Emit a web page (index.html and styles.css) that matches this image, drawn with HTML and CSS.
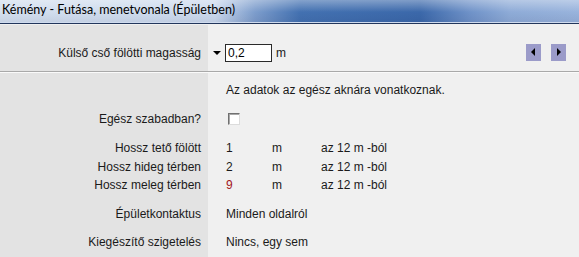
FILE: index.html
```html
<!DOCTYPE html>
<html lang="hu">
<head>
  <meta charset="UTF-8" />
  <title>Kémény - Futása, menetvonala</title>
  <link rel="stylesheet" href="styles.css">
</head>
<body>
  <div class="window">
    <div class="titlebar">Kémény - Futása, menetvonala (Épületben)</div>

    <div class="panel">
      <div class="row head">
        <div class="label">Külső cső fölötti magasság</div>
        <div class="value">
          <span class="drop"></span>
          <span class="field">0,2</span>
          <span class="field-unit">m</span>
        </div>
        <div class="nav">
          <button class="arrow prev"></button>
          <button class="arrow next"></button>
        </div>
      </div>

      <div class="divider"></div>

      <div class="row note">
        <div class="label"></div>
        <div class="value">Az adatok az egész aknára vonatkoznak.</div>
      </div>

      <div class="row check">
        <div class="label">Egész szabadban?</div>
        <div class="value"><span class="checkbox"></span></div>
      </div>

      <div class="lengths">
        <div class="row">
          <div class="label">Hossz tető fölött</div>
          <div class="value"><span class="qty">1</span><span class="unit">m</span><span>az 12 m -ból</span></div>
        </div>
        <div class="row">
          <div class="label">Hossz hideg térben</div>
          <div class="value"><span class="qty">2</span><span class="unit">m</span><span>az 12 m -ból</span></div>
        </div>
        <div class="row">
          <div class="label">Hossz meleg térben</div>
          <div class="value"><span class="qty warm">9</span><span class="unit">m</span><span>az 12 m -ból</span></div>
        </div>
      </div>

      <div class="row spaced">
        <div class="label">Épületkontaktus</div>
        <div class="value">Minden oldalról</div>
      </div>

      <div class="row spaced">
        <div class="label">Kiegészítő szigetelés</div>
        <div class="value">Nincs, egy sem</div>
      </div>
    </div>
  </div>
</body>
</html>
```

FILE: styles.css
```css
body {
  margin: 0;
  font-family: "Liberation Sans", Arial, sans-serif;
  font-size: 12px;
  color: #1a1a1a;
  background: #f0f0f0;
}
.window {
  height: 257px;
  overflow: hidden;
}
.titlebar {
  height: 22px;
  line-height: 20px;
  padding-left: 2px;
  font-family: Lato, "Noto Sans", sans-serif;
  font-size: 12.5px;
  color: #000;
  border-bottom: 1px solid #cfdbee;
  box-shadow: 0 1px 0 #22365c;
  margin-bottom: 2px;
  background:
    linear-gradient(to bottom, rgba(255,255,255,0.35), rgba(255,255,255,0) 55%, rgba(0,0,40,0.06)),
    linear-gradient(to right, #d3dfef 0, #cbd9ed 215px, #7d9dcc 255px, #4371b1 300px, #3b68aa 420px, #6f92c8 470px, #8eabd7 510px, #98b3dc 579px);
}
.panel {
  height: 233px;
  background: linear-gradient(to right, #e3e3e3 0, #e3e3e3 208px, #f0f0f0 208px);
}
.row {
  display: flex;
  align-items: center;
  height: 18px;
}
.label {
  width: 208px;
  flex: none;
  box-sizing: border-box;
  padding-right: 7px;
  text-align: right;
}
.value {
  display: flex;
  align-items: center;
  padding-left: 18px;
  white-space: nowrap;
}

/* first line with the editable height */
.row.head {
  height: 46px;
  box-sizing: border-box;
  padding-top: 19px;
  align-items: flex-start;
}
.row.head .label {
  line-height: 18px;
}
.row.head .value {
  padding-left: 5px;
  height: 18px;
}
.drop {
  width: 0;
  height: 0;
  border-top: 4px solid #000;
  border-left: 4px solid transparent;
  border-right: 4px solid transparent;
  margin-right: 4px;
}
.field {
  box-sizing: border-box;
  width: 47px;
  height: 18px;
  line-height: 16px;
  padding-left: 2px;
  border: 1px solid #2a2a2a;
  background: #fff;
  color: #000;
}
.field-unit {
  margin-left: 4px;
}
.nav {
  margin-left: auto;
  margin-right: 13px;
  display: flex;
  gap: 10px;
}
.arrow {
  width: 15px;
  height: 17px;
  padding: 0;
  border: none;
  background: #9b9bc9;
  position: relative;
}
.arrow::after {
  content: "";
  position: absolute;
  top: 4px;
  width: 0;
  height: 0;
  border-top: 4px solid transparent;
  border-bottom: 4px solid transparent;
}
.arrow.prev::after {
  left: 5px;
  border-right: 4px solid #000;
}
.arrow.next::after {
  left: 6px;
  border-left: 4px solid #000;
}

.divider {
  height: 1px;
  border-top: 1px solid #a9a9a9;
  background: #fafafa;
}

.row.note {
  margin-top: 8px;
}
.row.check {
  margin-top: 11px;
}
.checkbox {
  box-sizing: border-box;
  width: 12px;
  height: 12px;
  margin-left: 2px;
  background: #fff;
  border: 1px solid;
  border-color: #707070 #dcdcdc #dcdcdc #707070;
  box-shadow: inset 1px 1px 0 #a8a8a8;
}

.lengths {
  margin-top: 11px;
}
.lengths .row {
  height: 18.5px;
}
.qty {
  width: 46px;
}
.qty.warm {
  color: #a3161c;
}
.unit {
  width: 49px;
}

.row.spaced {
  margin-top: 10px;
}
```
